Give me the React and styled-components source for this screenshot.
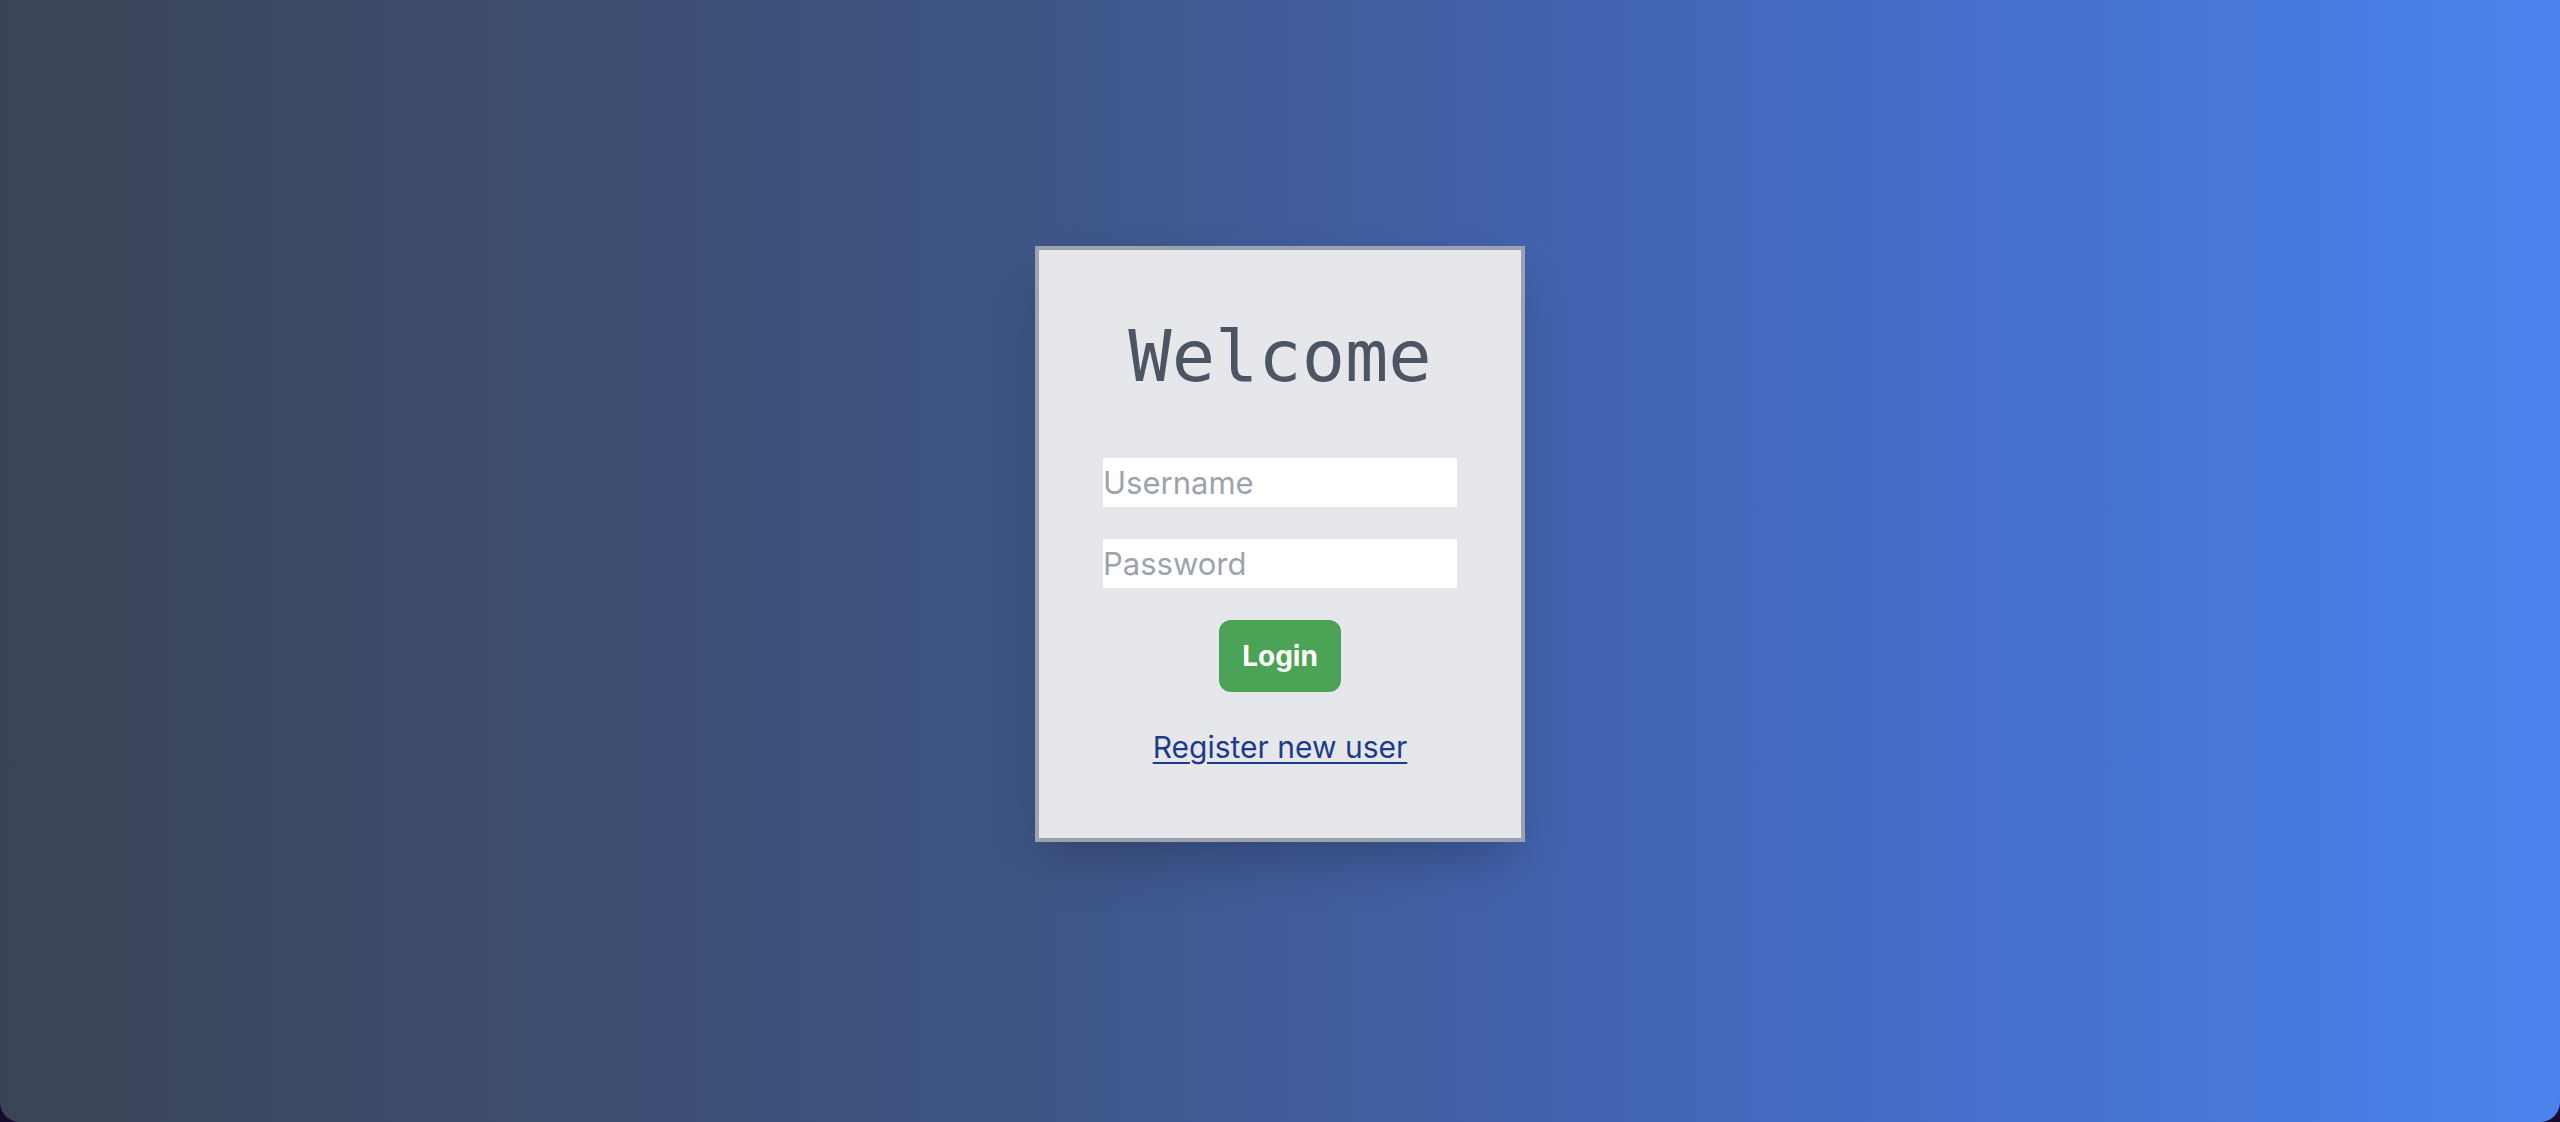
import React from 'react';
import styled, { createGlobalStyle } from 'styled-components';

const GlobalStyle = createGlobalStyle`
  html, body {
    margin: 0;
    padding: 0;
    height: 100%;
    background: #150a30;
  }
  #root {
    height: 100%;
  }
`;

const Page = styled.div`
  box-sizing: border-box;
  height: 100vh;
  display: flex;
  align-items: center;
  justify-content: center;
  padding-bottom: 34px;
  background: linear-gradient(90deg, #3b4456 0%, #3e5585 40%, #4469c0 70%, #4a83ed 100%);
  border-radius: 0 0 20px 20px;
  font-family: Inter, 'Liberation Sans', sans-serif;
`;

const Card = styled.div`
  box-sizing: border-box;
  width: 490px;
  padding: 64px 64px 68px;
  display: flex;
  flex-direction: column;
  align-items: center;
  background: #e5e7eb;
  border: 4px solid #9ca3af;
  box-shadow: 0 25px 50px -12px rgba(0, 0, 0, 0.25);
`;

const Title = styled.h1`
  margin: 0 0 60px;
  font-family: 'DejaVu Sans Mono', 'Liberation Mono', monospace;
  font-size: 72px;
  font-weight: 400;
  line-height: 84px;
  color: #4b5563;
`;

const Form = styled.form`
  width: 100%;
  display: flex;
  flex-direction: column;
  align-items: center;
  gap: 32px;
`;

const Input = styled.input`
  box-sizing: border-box;
  width: 100%;
  height: 49px;
  padding: 0;
  border: none;
  border-radius: 0;
  background: #fff;
  font-family: Inter, 'Liberation Sans', sans-serif;
  font-size: 31px;
  color: #374151;
  outline: none;

  &::placeholder {
    color: #9ca3af;
  }
`;

const Button = styled.button`
  height: 72px;
  padding: 0 23px;
  border: none;
  border-radius: 12px;
  background: #4ba355;
  color: #fff;
  font-family: Inter, 'Liberation Sans', sans-serif;
  font-size: 28px;
  font-weight: 700;
  cursor: pointer;
`;

const RegisterLink = styled.a`
  margin-top: 33px;
  font-size: 30px;
  line-height: 45px;
  color: #1e3a8a;
  text-decoration: underline;
  text-underline-offset: 4px;
  text-decoration-thickness: 2px;
`;

const App = () => {
    return (
        <>
            <GlobalStyle />
            <Page>
                <Card>
                    <Title>Welcome</Title>
                    <Form onSubmit={(e) => e.preventDefault()}>
                        <Input type="text" placeholder="Username" />
                        <Input type="password" placeholder="Password" />
                        <Button type="submit">Login</Button>
                    </Form>
                    <RegisterLink href="#">Register new user</RegisterLink>
                </Card>
            </Page>
        </>
    );
};

export default App;
